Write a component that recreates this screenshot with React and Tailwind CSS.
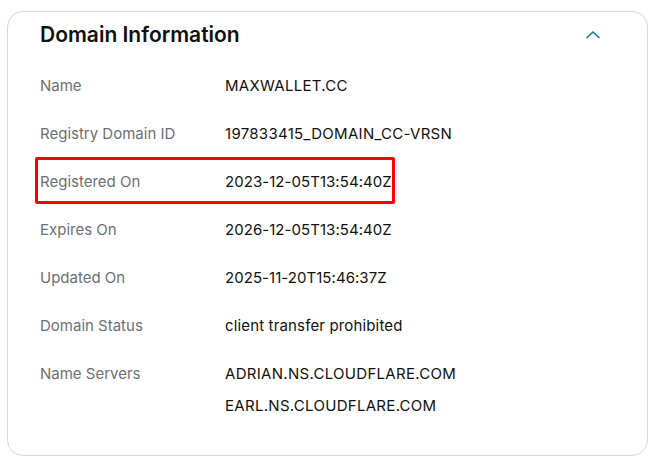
const rows = [
  { label: "Name", values: ["MAXWALLET.CC"], track: "tracking-[0.3px]" },
  { label: "Registry Domain ID", values: ["197833415_DOMAIN_CC-VRSN"], track: "tracking-[0.3px]" },
  { label: "Registered On", values: ["2023-12-05T13:54:40Z"], track: "tracking-[0.05px]", highlight: true },
  { label: "Expires On", values: ["2026-12-05T13:54:40Z"], track: "tracking-[0.05px]" },
  { label: "Updated On", values: ["2025-11-20T15:46:37Z"], track: "tracking-[0.05px]" },
  { label: "Domain Status", values: ["client transfer prohibited"], track: "tracking-[0.15px]" },
  {
    label: "Name Servers",
    values: ["ADRIAN.NS.CLOUDFLARE.COM", "EARL.NS.CLOUDFLARE.COM"],
    track: "tracking-[0.3px]",
  },
];

export default function App() {
  return (
    <div
      className="w-[657px] h-[467px] bg-white pt-[11px] pl-[7px]"
      style={{ fontFamily: "Inter, 'Noto Sans', sans-serif" }}
    >
      <div className="w-[641px] h-[445px] rounded-[16px] border border-[#d5d8dc] pl-[32px] pr-[46px] pt-[9px]">
        {/* Header */}
        <div className="flex items-center justify-between h-[28px]">
          <h2 className="text-[21px] leading-[28px] font-semibold text-[#111111]">
            Domain Information
          </h2>
          <svg width="16" height="10" viewBox="0 0 16 10">
            <path d="M1.5 8 L8 2 L14.5 8" fill="none" stroke="#1b7c84" strokeWidth="1.6" />
          </svg>
        </div>

        <div className="mt-[13px] flex flex-col">
          {rows.map((row) => (
            <div key={row.label} className="relative flex py-[12px]">
              <div className="w-[185px] shrink-0 text-[15px] leading-[24px] text-[#6c7079]">
                {row.label}
              </div>
              <div className={`flex flex-col gap-[8px] text-[15px] leading-[24px] text-[#111111] ${row.track}`}>
                {row.values.map((v) => (
                  <span key={v}>{v}</span>
                ))}
              </div>
              {row.highlight && (
                <div className="absolute left-[-5px] top-[-1px] w-[360px] h-[47px] border-[3px] border-[#ff0000] rounded-[2px]" />
              )}
            </div>
          ))}
        </div>
      </div>
    </div>
  );
}
